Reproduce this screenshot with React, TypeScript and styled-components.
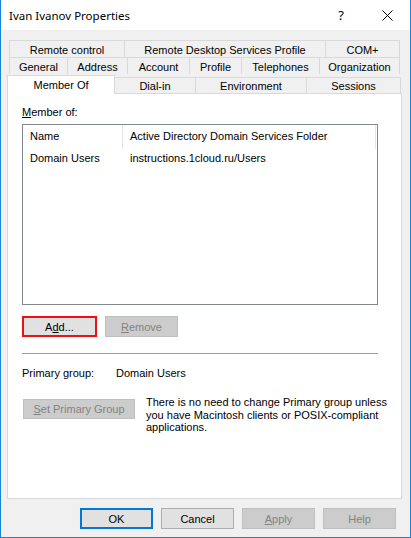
import React from "react";
import styled, { createGlobalStyle } from "styled-components";

const GlobalStyle = createGlobalStyle`
  html, body {
    margin: 0;
    padding: 0;
    background: #ffffff;
  }
  * {
    box-sizing: border-box;
  }
`;

const Window = styled.div`
  width: 411px;
  height: 538px;
  display: flex;
  flex-direction: column;
  background: #f0f0f0;
  border: 1px solid #1883d7;
  border-top: none;
  font-family: "Liberation Sans", Arial, sans-serif;
  font-size: 11px;
  color: #000;
`;

const TitleBar = styled.div`
  height: 30px;
  display: flex;
  align-items: center;
  background: #ffffff;
  padding-left: 8px;
`;

const Title = styled.div`
  flex: 1;
  font-family: "Noto Sans", "Open Sans", sans-serif;
  font-size: 11.5px;
  color: #000;
`;

const CaptionButton = styled.div`
  width: 46px;
  height: 30px;
  display: flex;
  align-items: center;
  justify-content: center;
  font-family: "Noto Sans", sans-serif;
  font-size: 13px;
`;

const Body = styled.div`
  flex: 1;
  display: flex;
  flex-direction: column;
  padding: 10px 8px 0 6px;
`;

const TabRow = styled.div<{ $front?: boolean }>`
  display: flex;
  align-items: flex-end;
  height: ${(p) => (p.$front ? "19px" : "17px")};
  margin-left: ${(p) => (p.$front ? "0" : "2px")};
`;

const Tab = styled.div<{ $w: number; $active?: boolean; $front?: boolean }>`
  width: ${(p) => p.$w}px;
  height: ${(p) => (p.$active ? "19px" : p.$front ? "16px" : "17px")};
  display: flex;
  align-items: center;
  justify-content: center;
  padding-top: ${(p) => (p.$active ? "0" : p.$front ? "1px" : "2px")};
  background: ${(p) => (p.$active ? "#ffffff" : "#f0f0f0")};
  border: 1px solid #d9d9d9;
  border-bottom: none;
  white-space: nowrap;
  position: relative;
  z-index: ${(p) => (p.$active ? 1 : 0)};
  margin-bottom: ${(p) => (p.$active ? "-1px" : "0")};
  & + & {
    border-left: none;
  }
`;

const Panel = styled.div`
  height: 406px;
  background: #ffffff;
  border: 1px solid #d9d9d9;
  display: flex;
  flex-direction: column;
  padding: 12px 22px 0 14px;
`;

const Label = styled.div`
  line-height: 13px;
  height: 13px;
  white-space: nowrap;
`;

const ListBox = styled.div`
  margin-top: 5px;
  width: 356px;
  height: 181px;
  border: 1px solid #828790;
  display: flex;
  flex-direction: column;
`;

const ListRow = styled.div<{ $header?: boolean }>`
  display: flex;
  height: ${(p) => (p.$header ? "24px" : "17px")};
  align-items: stretch;
`;

const Cell = styled.div<{ $w: number; $header?: boolean }>`
  width: ${(p) => p.$w}px;
  display: flex;
  align-items: center;
  padding-left: 7px;
  padding-bottom: ${(p) => (p.$header ? "2px" : "0")};
  border-right: ${(p) => (p.$header ? "1px solid #e5e5e5" : "1px solid transparent")};
  white-space: nowrap;
`;

const ButtonRow = styled.div`
  display: flex;
  gap: 8px;
  margin-top: 11px;
`;

const Button = styled.div<{ $w: number; $h?: number; $disabled?: boolean; $focus?: "red" | "blue" }>`
  width: ${(p) => p.$w}px;
  height: ${(p) => p.$h ?? 21}px;
  flex-shrink: 0;
  display: flex;
  align-items: center;
  justify-content: center;
  background: ${(p) => (p.$disabled ? "#cccccc" : "#e1e1e1")};
  color: ${(p) => (p.$disabled ? "#838383" : "#000")};
  border: ${(p) =>
    p.$focus === "red"
      ? "2px solid #ee1111"
      : p.$focus === "blue"
      ? "2px solid #0078d7"
      : p.$disabled
      ? "1px solid #bfbfbf"
      : "1px solid #adadad"};
  white-space: nowrap;
`;

const Separator = styled.div`
  margin-top: 16px;
  height: 1px;
  width: 356px;
  background: #a0a0a0;
`;

const InfoRow = styled.div`
  display: flex;
  margin-top: 13px;
  line-height: 13px;
`;

const InfoLabel = styled.div`
  width: 94px;
`;

const GroupRow = styled.div`
  display: flex;
  align-items: flex-start;
  margin-top: 19px;
  padding-left: 1px;
`;

const Note = styled.div`
  margin-left: 11px;
  margin-top: -3px;
  line-height: 12.5px;
  white-space: nowrap;
`;

const Footer = styled.div`
  display: flex;
  justify-content: flex-end;
  gap: 8px;
  margin-top: 9px;
  padding-right: 6px;
`;

const tabsTop = [
  { label: "Remote control", w: 116 },
  { label: "Remote Desktop Services Profile", w: 201 },
  { label: "COM+", w: 74 },
];

const tabsMid = [
  { label: "General", w: 59 },
  { label: "Address", w: 60 },
  { label: "Account", w: 62 },
  { label: "Profile", w: 52 },
  { label: "Telephones", w: 78 },
  { label: "Organization", w: 80 },
];

const tabsFront = [
  { label: "Member Of", w: 108, active: true },
  { label: "Dial-in", w: 81 },
  { label: "Environment", w: 111 },
  { label: "Sessions", w: 94 },
];

export default function App() {
  return (
    <>
      <GlobalStyle />
      <Window>
        <TitleBar>
          <Title>Ivan Ivanov Properties</Title>
          <CaptionButton>?</CaptionButton>
          <CaptionButton>
            <svg width="11" height="11" viewBox="0 0 11 11">
              <path d="M0.5 0.5 L10.5 10.5 M10.5 0.5 L0.5 10.5" stroke="#000" strokeWidth="1" />
            </svg>
          </CaptionButton>
        </TitleBar>
        <Body>
          <TabRow>
            {tabsTop.map((t) => (
              <Tab key={t.label} $w={t.w}>{t.label}</Tab>
            ))}
          </TabRow>
          <TabRow>
            {tabsMid.map((t) => (
              <Tab key={t.label} $w={t.w}>{t.label}</Tab>
            ))}
          </TabRow>
          <TabRow $front>
            {tabsFront.map((t) => (
              <Tab key={t.label} $w={t.w} $front $active={t.active}>{t.label}</Tab>
            ))}
          </TabRow>
          <Panel>
            <Label>
              <u>M</u>ember of:
            </Label>
            <ListBox>
              <ListRow $header>
                <Cell $w={100} $header>Name</Cell>
                <Cell $w={253} $header>Active Directory Domain Services Folder</Cell>
              </ListRow>
              <ListRow>
                <Cell $w={100}>Domain Users</Cell>
                <Cell $w={253}>instructions.1cloud.ru/Users</Cell>
              </ListRow>
            </ListBox>
            <ButtonRow>
              <Button $w={75} $focus="red">
                A<u>d</u>d...
              </Button>
              <Button $w={73} $disabled>
                <u>R</u>emove
              </Button>
            </ButtonRow>
            <Separator />
            <InfoRow>
              <InfoLabel>Primary group:</InfoLabel>
              <div>Domain Users</div>
            </InfoRow>
            <GroupRow>
              <Button $w={112} $h={20} $disabled>
                <u>S</u>et Primary Group
              </Button>
              <Note>
                There is no need to change Primary group unless
                <br />
                you have Macintosh clients or POSIX-compliant
                <br />
                applications.
              </Note>
            </GroupRow>
          </Panel>
          <Footer>
            <Button $w={73} $h={21} $focus="blue">OK</Button>
            <Button $w={73} $h={21}>Cancel</Button>
            <Button $w={73} $h={21} $disabled>
              <u>A</u>pply
            </Button>
            <Button $w={73} $h={21} $disabled>Help</Button>
          </Footer>
        </Body>
      </Window>
    </>
  );
}
